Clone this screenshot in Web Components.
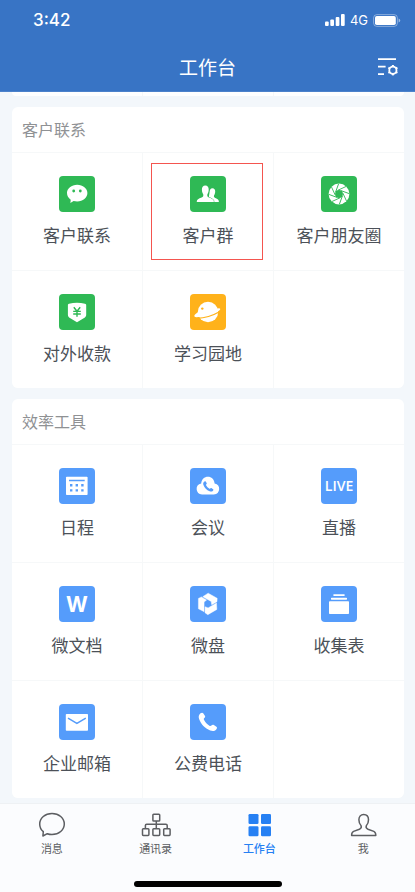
<!DOCTYPE html>
<html lang="zh-CN">
<head>
<meta charset="utf-8">
<meta name="viewport" content="width=device-width, initial-scale=1">
<title>工作台</title>
<style>
  :root {
    --brand: #3874c5;
    --page: #f3f7fb;
    --line: #f6f8f9;
    --green: #2fb955;
    --amber: #ffb21a;
    --blue: #559cfb;
    --active: #2680f3;
  }
  body {
    margin: 0;
    background: var(--page);
    color: #4c5158;
    font-family: "Noto Sans CJK SC", "Noto Sans", sans-serif;
  }
</style>
</head>
<body>
<work-app>
  <status-bar slot="top" time="3:42" network="4G"></status-bar>
  <nav-bar slot="top">工作台</nav-bar>

  <card-tail></card-tail>

  <tool-section>
    <span slot="title">客户联系</span>
    <tool-tile icon="chat" tone="green">客户联系</tool-tile>
    <tool-tile icon="group" tone="green" marked>客户群</tool-tile>
    <tool-tile icon="aperture" tone="green">客户朋友圈</tool-tile>
    <tool-tile icon="pay" tone="green">对外收款</tool-tile>
    <tool-tile icon="planet" tone="amber">学习园地</tool-tile>
    <tool-tile></tool-tile>
  </tool-section>

  <tool-section>
    <span slot="title">效率工具</span>
    <tool-tile icon="calendar" tone="blue">日程</tool-tile>
    <tool-tile icon="meeting" tone="blue">会议</tool-tile>
    <tool-tile icon="live" tone="blue">直播</tool-tile>
    <tool-tile icon="doc" tone="blue">微文档</tool-tile>
    <tool-tile icon="drive" tone="blue">微盘</tool-tile>
    <tool-tile icon="collect" tone="blue">收集表</tool-tile>
    <tool-tile icon="mail" tone="blue">企业邮箱</tool-tile>
    <tool-tile icon="phone" tone="blue">公费电话</tool-tile>
    <tool-tile></tool-tile>
  </tool-section>

  <tab-bar slot="bottom">
    <tab-item icon="message">消息</tab-item>
    <tab-item icon="contacts">通讯录</tab-item>
    <tab-item icon="workbench" active>工作台</tab-item>
    <tab-item icon="me">我</tab-item>
  </tab-bar>
</work-app>

<script>
const repeat = (n, step, markup) =>
  Array.from({ length: n }, (_, i) => `<g transform="rotate(${i * step} 18 18)">${markup}</g>`).join('');

/* Tile glyphs: white on a 36-unit square; var(--tone) cuts back to the tile colour. */
const HANDSET = 'M10.2 9.6c1-1 2.3-1.3 3-.4l1.700 2.500c.6.9.3 1.700-.6 2.400-.7.6-.6 1.200-.2 2 1.300 2.400 3 4.200 5.300 5.600.8.5 1.400.5 2-.1.8-.9 1.600-1.100 2.500-.5l2.500 1.700c.9.7.7 1.700-.2 2.700-1.500 1.600-3.500 1.900-6 1-5.300-2.200-9.200-6.200-11-11.200-.9-2.500-.5-4.200 1-5.700z';
const TILE_ICONS = {
  chat: `<path d="M18.200 8.800c5.700 0 10.200 3.700 10.200 8.300s-4.500 8.400-10.200 8.400c-1.300 0-2.500-.2-3.600-.5l-3.200 2 .3-3.300c-2.300-1.500-3.700-3.900-3.700-6.600 0-4.600 4.500-8.300 10.200-8.300z"/>
    <circle cx="14.700" cy="15" r="1.400" fill="var(--tone)"/><circle cx="21.300" cy="15" r="1.400" fill="var(--tone)"/>`,
  group: `<path d="M22.400 12.300c1.900 0 2.900 1.400 2.800 3.500-.1 1.600-.5 2.700-1.200 3.600-.3 1.200.1 2 1.300 2.500 2.400.9 3.600 1.500 3.600 4H18l1.600-10c.1-2.100 1-3.600 2.800-3.600z"/>
    <path stroke="var(--tone)" stroke-width="1" paint-order="stroke" d="M15.300 9.600c2.300 0 3.500 1.600 3.400 4.200-.1 2-.5 3.400-1.300 4.500-.4 1.600 0 2.500 1.600 3.200 3 1.200 4.900 1.800 4.900 4.400H6.700c0-2.600 1.900-3.200 4.900-4.400 1.600-.7 2-1.600 1.600-3.200-.8-1.100-1.200-2.500-1.300-4.500-.1-2.600 1.100-4.200 3.400-4.200z"/>`,
  aperture: `<circle cx="18" cy="18" r="10.400"/>
    <circle cx="18" cy="18" r="3.900" fill="var(--tone)"/>
    ${repeat(8, 45, '<path d="M17 14.200l8-3.700" fill="none" stroke="var(--tone)" stroke-width=".9"/>')}`,
  pay: `<path d="M10 9.800c2.700-.7 5.300-1 8-1s5.300.3 8 1c.8.200 1.200.6 1.200 1.400v9.600c0 1.200-.4 2-1.300 2.600L18 28.300l-7.900-4.900c-.8-.6-1.200-1.400-1.200-2.600v-9.600c0-.8.4-1.200 1.100-1.400z"/>
    <g fill="none" stroke="var(--tone)" stroke-width="1.400"><path d="M14.800 13.200l3.200 4.100 3.200-4.100M18 17v5.800M14.200 17.400h7.600M14.200 20h7.600"/></g>`,
  planet: `<circle cx="18" cy="18" r="10.200"/>
    <circle cx="12.300" cy="14.600" r="1.200" fill="var(--tone)"/>
    <path d="M9 17.200l-4 3.300c-1.500 1.600-.4 3 2 2.800 8-.4 15.500-2.700 22-6.500 2-1.300 1.700-2.700-.8-2.400l-3.200.6z"/>
    <path d="M7 24.300c8-.3 15.500-2.600 22.500-6.600" fill="none" stroke="var(--tone)" stroke-width="1.200"/>`,
  calendar: `<rect x="7" y="8.700" width="21.600" height="18.400" rx=".8"/>
    <g fill="var(--tone)"><path d="M10 11.700h15.700v1.500H10z"/>
    <path d="M11 16.100h2.400v2.400H11zM16.600 16.100h2.400v2.400h-2.400zM22.200 16.100h2.400v2.400h-2.400zM11 21.200h2.400v2.400H11zM16.600 21.200h2.400v2.400h-2.400zM22.200 21.200h2.400v2.400h-2.400z"/></g>`,
  meeting: `<path d="M12 26.500a5.600 5.600 0 0 1-.8-11.100c.3-4 3.200-6.700 6.700-6.700s6.400 2.700 6.700 6.700a5.600 5.600 0 0 1-.8 11.100z"/>
    <path transform="translate(8.300 8.400) scale(.56)" fill="var(--tone)" d="${HANDSET}"/>`,
  live: `<text x="18" y="23" text-anchor="middle" font-family="Open Sans, sans-serif" font-weight="600" font-size="14">LIVE</text>`,
  doc: `<text x="18" y="26" text-anchor="middle" font-family="Inter, sans-serif" font-weight="700" font-size="21">W</text>`,
  drive: [0, 120, 240].map(a => `<path transform="rotate(${a} 17.800 17.800)" stroke="#fff" stroke-width=".4" stroke-linejoin="round" d="M8.400 12.400l3-1.500 5.200 3.100-2.500 2v9.700l-5.700-2.900z"/>`).join(''),
  collect: `<rect x="8" y="15.300" width="20" height="12.700" rx=".8"/><rect x="10" y="11.700" width="16" height="2" rx=".6"/><rect x="12.300" y="8.200" width="11.400" height="1.700" rx=".6"/>`,
  mail: `<rect x="6.800" y="10" width="22.200" height="16.700" rx=".8"/><path d="M9 14.200l8.900 5.200 8.900-5.200" fill="none" stroke="var(--tone)" stroke-width="1.500"/>`,
  phone: `<path d="${HANDSET}"/>`
};

const TAB_ICONS = {
  message: `<path d="M15 1.500c6.900 0 12.300 4.600 12.300 10.500S21.900 22.500 15 22.500c-1.700 0-3.300-.3-4.700-.8L5.900 24l.4-4.300C4 17.800 2.700 15.100 2.700 12 2.700 6.100 8.100 1.500 15 1.500z"/>`,
  contacts: `<rect x="11.900" y="2.200" width="6.800" height="6.800" rx=".8"/><path d="M15.300 9v7M4.400 16v-2.400q0-1.300 1.300-1.300h19.200q1.300 0 1.300 1.300V16"/>
    <rect x="1.500" y="16.800" width="6.400" height="6.600" rx=".8"/><rect x="11.900" y="16.800" width="6.800" height="6.600" rx=".8"/><rect x="22.700" y="16.800" width="6.400" height="6.600" rx=".8"/>`,
  workbench: `<g fill="currentColor" stroke="none"><rect x="4.500" y="2" width="10" height="10" rx="1.300"/><rect x="17" y="2" width="10" height="10" rx="1.300"/><rect x="4.500" y="14.200" width="10" height="10" rx="1.300"/><rect x="17" y="14.200" width="10" height="10" rx="1.300"/></g>`,
  me: `<path d="M15.700 2.400c3 0 4.800 2.200 4.800 5.400 0 2.600-.8 4.600-2.200 6-.7 1.800-.2 2.600 1.700 3.400l5.800 2.200c1.500.6 2 1.600 2 4.100H3.600c0-2.500.6-3.500 2-4.100l5.800-2.200c1.900-.8 2.400-1.600 1.700-3.400-1.400-1.400-2.200-3.400-2.200-6 0-3.200 1.800-5.400 4.800-5.400z"/>`
};

/* Attaches an open shadow root filled from a template. */
class Part extends HTMLElement {
  connectedCallback() {
    if (this.shadowRoot) return;
    const t = document.createElement('template');
    t.innerHTML = this.view();
    this.attachShadow({ mode: 'open' }).append(t.content.cloneNode(true));
  }
}

customElements.define('work-app', class extends Part {
  view() {
    return `<style>
      :host { display: flex; flex-direction: column; min-height: 100vh; }
      header { position: sticky; top: 0; z-index: 2; background: var(--brand); color: #fff; }
      main { flex: 1; display: flex; flex-direction: column; gap: 11px; padding: 0 11px 5px 12px; }
      footer { position: sticky; bottom: 0; z-index: 2; }
    </style>
    <header><slot name="top"></slot></header>
    <main><slot></slot></main>
    <footer><slot name="bottom"></slot></footer>`;
  }
});

customElements.define('status-bar', class extends Part {
  view() {
    return `<style>
      :host { display: flex; align-items: center; justify-content: space-between; height: 40px; padding: 0 14px 0 33px; font-family: Inter, sans-serif; }
      time { font-size: 17px; font-weight: 500; line-height: 20px; }
      div { display: flex; align-items: center; gap: 5px; font-size: 13px; line-height: 20px; }
      svg { display: block; }
    </style>
    <time>${this.getAttribute('time')}</time>
    <div>
      <svg width="20" height="12" fill="#fff" aria-label="信号"><rect y="7.500" width="3.700" height="4.500" rx="1"/><rect x="5.300" y="5.500" width="3.700" height="6.500" rx="1"/><rect x="10.700" y="3" width="3.700" height="9" rx="1"/><rect x="16" width="3.700" height="12" rx="1"/></svg>
      <span>${this.getAttribute('network')}</span>
      <svg width="28" height="13" aria-label="电量"><rect x=".6" y=".6" width="23.800" height="11.800" rx="3.300" fill="none" stroke="#fff" stroke-opacity=".4"/><rect x="2" y="2" width="20.800" height="9" rx="1.800" fill="#fff"/><path d="M25.600 4.500q1.600.5 1.600 2t-1.600 2z" fill="#fff" fill-opacity=".5"/></svg>
    </div>`;
  }
});

customElements.define('nav-bar', class extends Part {
  view() {
    return `<style>
      :host { display: grid; grid-template-columns: 1fr auto 1fr; align-items: center; height: 52px; padding: 2px 16px 0; box-sizing: border-box; border-bottom: 1px solid #4c82cb; }
      h1 { grid-column: 2; margin: 0; font-size: 19px; font-weight: 400; line-height: 28px; }
      button { justify-self: end; padding: 0; border: 0; background: none; color: inherit; }
      svg { display: block; }
    </style>
    <h1><slot></slot></h1>
    <button type="button" aria-label="设置">
      <svg width="22" height="20" fill="none" stroke="currentColor" stroke-width="1.900">
        <path d="M1 2.100h18M1 9.600h7.600M1 17.100h6"/>
        <circle cx="15.900" cy="13.200" r="3.600" stroke-width="1.800"/>
        <g stroke-width="2">${[0, 60, 120, 180, 240, 300].map(a => `<path d="M15.900 9.600V8" transform="rotate(${a} 15.900 13.200)"/>`).join('')}</g>
      </svg>
    </button>`;
  }
});

/* Bottom edge of the section that is scrolled away under the header. */
customElements.define('card-tail', class extends Part {
  view() {
    return `<style>
      :host { display: grid; grid-template-columns: repeat(3, 1fr); gap: 1px; height: 4px; border-radius: 0 0 5px 5px; overflow: hidden; background: var(--line); }
      i { background: #fff; }
    </style><i></i><i></i><i></i>`;
  }
});

customElements.define('tool-section', class extends Part {
  view() {
    return `<style>
      :host { display: block; border-radius: 6px; overflow: hidden; background: #fff; }
      h2 { margin: 0; padding: 10px 10px 11px; color: #8f9194; font-size: 16px; font-weight: 400; line-height: 24px; }
      div { display: grid; grid-template-columns: repeat(3, 1fr); gap: 1px; padding-top: 1px; background: var(--line); }
    </style>
    <h2><slot name="title"></slot></h2>
    <div><slot></slot></div>`;
  }
});

customElements.define('tool-tile', class extends Part {
  view() {
    const icon = this.getAttribute('icon');
    const style = `<style>
      :host { display: block; position: relative; min-height: 117px; background: #fff; --tone: var(--${this.getAttribute('tone')}); }
      :host([marked])::after { content: ""; position: absolute; inset: 10px 10px 10px 8px; border: 1px solid #f4554f; pointer-events: none; }
      button { display: flex; flex-direction: column; align-items: center; gap: 11px; width: 100%; padding: 23px 0; border: 0; background: none; color: inherit; font: inherit; font-size: 17px; line-height: 24px; }
      svg { display: block; border-radius: 4px; background: var(--tone); }
    </style>`;
    return icon ? `${style}<button type="button"><svg width="36" height="36" viewBox="0 0 36 36" fill="#fff" aria-hidden="true">${TILE_ICONS[icon]}</svg><span><slot></slot></span></button>` : style;
  }
});

customElements.define('tab-bar', class extends Part {
  view() {
    return `<style>
      :host { display: block; padding-bottom: 5px; border-top: 1px solid #eef1f4; background: #fbfcfe; }
      nav { display: grid; grid-template-columns: repeat(4, 1fr); padding: 8px 0 25px; }
      hr { width: 148px; height: 6px; margin: 0 auto; border: 0; border-radius: 3px; background: #000; }
    </style>
    <nav><slot></slot></nav><hr>`;
  }
});

customElements.define('tab-item', class extends Part {
  view() {
    return `<style>
      :host { display: block; color: #5c5e62; }
      :host([active]) { color: var(--active); font-weight: 500; }
      button { display: flex; flex-direction: column; align-items: center; gap: 2px; width: 100%; padding: 0; border: 0; background: none; color: inherit; font: inherit; font-size: 11px; line-height: 16px; }
      svg { display: block; }
    </style>
    <button type="button"><svg width="30" height="26" viewBox="0 0 30 26" fill="none" stroke="currentColor" stroke-width="1.500" stroke-linejoin="round" aria-hidden="true">${TAB_ICONS[this.getAttribute('icon')]}</svg><span><slot></slot></span></button>`;
  }
});
</script>
</body>
</html>
